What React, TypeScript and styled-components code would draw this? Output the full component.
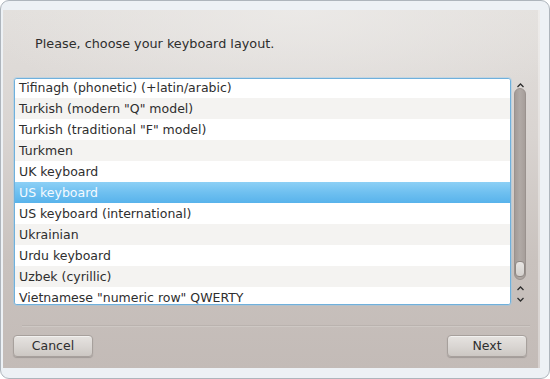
import React from "react";
import styled, { createGlobalStyle } from "styled-components";

const GlobalStyle = createGlobalStyle`
  html, body { margin: 0; padding: 0; background: #ffffff; }
  body { font-family: "DejaVu Sans", "Liberation Sans", sans-serif; }
  * { box-sizing: border-box; }
`;

const Window = styled.div`
  width: 550px;
  height: 379px;
  border: 1px solid #aeb5bc;
  border-radius: 9px;
  background: #edf1f5;
  padding: 9px 9px 10px 2px;
  display: flex;
`;

const Content = styled.div`
  flex: 1;
  display: flex;
  flex-direction: column;
  background:
    radial-gradient(ellipse 60% 30% at 55% 0%, rgba(236, 234, 232, 0.9), rgba(236, 234, 232, 0) 100%),
    linear-gradient(to bottom, #e2dfdc 0%, #d9d4d1 35%, #c9c2be 70%, #c3bbb7 100%);
  box-shadow: inset -2px 0 0 rgba(255, 255, 255, 0.35);
`;

const Heading = styled.div`
  padding: 26px 0 0 32px;
  font-size: 12.8px;
  line-height: 15px;
  color: #2e2e2e;
`;

const ListRow = styled.div`
  margin-top: 27px;
  display: flex;
  padding-left: 11px;
  height: 227px;
`;

const ListBox = styled.div`
  width: 497px;
  height: 227px;
  border: 1px solid #6fb0dc;
  border-radius: 3px;
  background: #ffffff;
  overflow: hidden;
  box-shadow: 0 0 0 1px rgba(140, 200, 240, 0.35);
`;

const ListInner = styled.div`
  margin-top: -2px;
`;

const Item = styled.div<{ $odd?: boolean; $selected?: boolean }>`
  height: 21px;
  line-height: 21px;
  padding-left: 4px;
  font-size: 12.5px;
  white-space: nowrap;
  color: ${(p) => (p.$selected ? "#f4faff" : "#2e2e2e")};
  background: ${(p) =>
    p.$selected
      ? "linear-gradient(to bottom, #8dd0f6 0%, #6fc0f0 50%, #58b3eb 100%)"
      : p.$odd
      ? "#f4f3f1"
      : "#ffffff"};
`;

const ScrollCol = styled.div`
  width: 16px;
  margin-left: 1px;
  display: flex;
  flex-direction: column;
  align-items: center;
`;

const ArrowBox = styled.div<{ $h: number }>`
  height: ${(p) => p.$h}px;
  display: flex;
  align-items: flex-end;
  justify-content: center;
`;

const Track = styled.div`
  width: 12px;
  height: 192px;
  border-radius: 6px;
  background: linear-gradient(to right, #a39b97, #b1aaa6 50%, #a69e9a);
  border: 1px solid #9a928e;
  display: flex;
  flex-direction: column;
  justify-content: flex-end;
  align-items: center;
  padding-bottom: 2px;
`;

const Handle = styled.div`
  width: 10px;
  height: 16px;
  border-radius: 4px;
  background: linear-gradient(to bottom, #e8e5e3, #d4d0cd);
  border: 1px solid #8f8884;
`;

const Separator = styled.div`
  margin: 20px 10px 0 19px;
  height: 2px;
  border-top: 1px solid #bab3af;
  border-bottom: 1px solid #cec8c4;
`;

const Footer = styled.div`
  margin-top: 8px;
  display: flex;
  justify-content: space-between;
  padding: 0 13px 0 10px;
`;

const Button = styled.button`
  width: 80px;
  height: 22px;
  border: 1px solid #a7a09c;
  border-radius: 4px;
  background: linear-gradient(to bottom, #e6e3e0 0%, #dad6d3 50%, #ccc7c3 100%);
  box-shadow: 0 1px 1px rgba(0, 0, 0, 0.18), inset 0 1px 0 rgba(255, 255, 255, 0.5);
  font-family: "DejaVu Sans", "Liberation Sans", sans-serif;
  font-size: 12.5px;
  color: #2e2e2e;
  padding: 0;
  line-height: 20px;
`;

const Chevron = ({ up }: { up?: boolean }) => (
  <svg width="9" height="6" viewBox="0 0 9 6">
    <path
      d={up ? "M1.5 5 L4.5 2 L7.5 5" : "M1.5 1 L4.5 4 L7.5 1"}
      fill="none"
      stroke="#2e2e2e"
      strokeWidth="1.3"
    />
  </svg>
);

const items = [
  "Tifinagh (phonetic) (+latin/arabic)",
  'Turkish (modern "Q" model)',
  'Turkish (traditional "F" model)',
  "Turkmen",
  "UK keyboard",
  "US keyboard",
  "US keyboard (international)",
  "Ukrainian",
  "Urdu keyboard",
  "Uzbek (cyrillic)",
  'Vietnamese "numeric row" QWERTY',
];

export default function App() {
  return (
    <>
      <GlobalStyle />
      <Window>
        <Content>
          <Heading>Please, choose your keyboard layout.</Heading>
          <ListRow>
            <ListBox>
              <ListInner>
                {items.map((t, i) => (
                  <Item key={t} $odd={i % 2 === 1} $selected={i === 5}>
                    {t}
                  </Item>
                ))}
              </ListInner>
            </ListBox>
            <ScrollCol>
              <ArrowBox $h={10}>
                <Chevron up />
              </ArrowBox>
              <Track>
                <Handle />
              </Track>
              <ArrowBox $h={11}>
                <Chevron up />
              </ArrowBox>
              <ArrowBox $h={12}>
                <Chevron />
              </ArrowBox>
            </ScrollCol>
          </ListRow>
          <Separator />
          <Footer>
            <Button>Cancel</Button>
            <Button>Next</Button>
          </Footer>
        </Content>
      </Window>
    </>
  );
}
